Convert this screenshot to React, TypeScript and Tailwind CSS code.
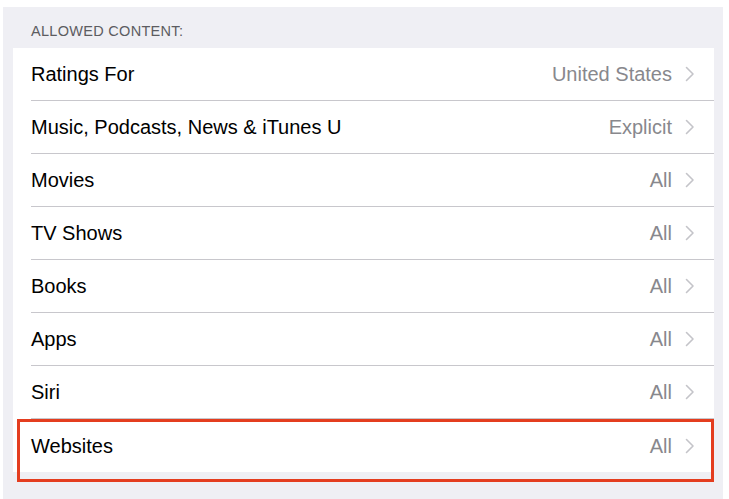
const ROWS: { label: string; value: string }[] = [
  { label: "Ratings For", value: "United States" },
  { label: "Music, Podcasts, News & iTunes U", value: "Explicit" },
  { label: "Movies", value: "All" },
  { label: "TV Shows", value: "All" },
  { label: "Books", value: "All" },
  { label: "Apps", value: "All" },
  { label: "Siri", value: "All" },
  { label: "Websites", value: "All" },
];

function Chevron() {
  return (
    <svg width="10" height="16" viewBox="0 0 10 16" className="ml-[13px] shrink-0">
      <path d="M1.5 1.5 L8 8 L1.5 14.5" fill="none" stroke="#c4c4c9" strokeWidth="1.6" strokeLinecap="round" strokeLinejoin="round" />
    </svg>
  );
}

export default function App() {
  return (
    <div
      className="h-[499px] w-[729px] bg-white pl-[3px] pr-[6px] pt-[7px]"
      style={{ fontFamily: '"Liberation Sans", Arial, sans-serif' }}
    >
      <div className="h-full bg-[#efeff4] pl-[10px] pr-[9px]">
        <div className="pl-[18px] pt-[15px] pb-[8px] text-[14.5px] leading-[18px] tracking-[0.3px] text-[#5c5c61]">
          ALLOWED CONTENT:
        </div>
        <div className="relative bg-white">
          {ROWS.map((row, i) => (
            <div key={row.label} className="flex h-[53px] pl-[18px]">
              <div
                className={`flex flex-1 items-center pr-[19px] ${
                  i < ROWS.length - 1 ? "border-b border-[#c8c7cc]" : ""
                }`}
              >
                <span className="flex-1 text-[20px] text-black">{row.label}</span>
                <span className="text-[20px] text-[#88888d]">{row.value}</span>
                <Chevron />
              </div>
            </div>
          ))}
          <div className="pointer-events-none absolute left-[4px] right-0 bottom-[-10px] h-[63px] border-[3px] border-[#e43d1f]" />
        </div>
      </div>
    </div>
  );
}
